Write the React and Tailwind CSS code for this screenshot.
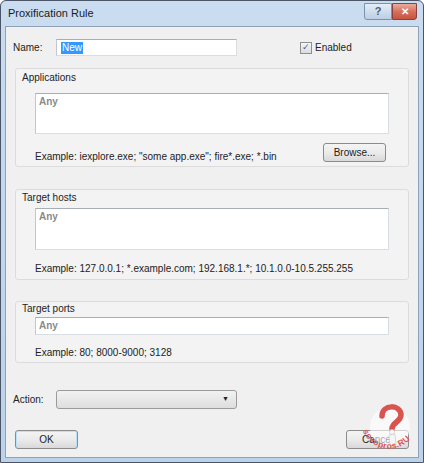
import React from 'react';

const FONT = { fontFamily: '"Liberation Sans", Arial, sans-serif' };

function Field({ className = '', children }) {
  return (
    <div className={`bg-white border border-[#d9dee4] border-t-[#a9adb5] border-l-[#c3c7cd] text-[10px] leading-[12px] ${className}`}>
      {children}
    </div>
  );
}

function Btn({ label, className = '' }) {
  return (
    <div className={`h-[19px] flex items-center justify-center rounded-[3px] border border-[#8b8b8b] bg-gradient-to-b from-[#f4f4f4] via-[#ebebeb] to-[#d9d9d9] text-[10px] text-[#222] shrink-0 ${className}`}>
      {label}
    </div>
  );
}

function Group({ title, labelTop, className, children }) {
  return (
    <div className={`mx-[9px] rounded-[3px] border border-[#dcdcdc] bg-[#f3f3f3] px-[19px] relative shrink-0 ${className}`}>
      <div className={`absolute left-[6px] text-[10px] leading-[12px] text-[#222] ${labelTop}`}>{title}</div>
      {children}
    </div>
  );
}

function Watermark() {
  return (
    <svg className="absolute left-[340px] top-[362px]" width="80" height="70" viewBox="0 0 80 70">
      <circle cx="44" cy="38" r="20" fill="#ffffff" fillOpacity="0.6" />
      <path d="M36 27 C36 15 55 15 55 26 C55 33 46 33 46 40" fill="none" stroke="#d9534f" strokeWidth="5.5" strokeLinecap="round" />
      <circle cx="46" cy="43" r="2.6" fill="#f6f6f6" stroke="#c4c4c4" strokeWidth="0.6" />
      <path d="M43 46 L49 45 L50 56 L44 57 Z" fill="#f6f6f6" stroke="#c4c4c4" strokeWidth="0.6" />
      <defs>
        <path id="wm-arc" d="M17 42 A28 28 0 0 0 71 30" />
      </defs>
      <text fontSize="8.5" fill="#d9534f" fontFamily="Liberation Sans, Arial, sans-serif" fontWeight="bold" letterSpacing="0.4">
        <textPath href="#wm-arc">sovopros.RU</textPath>
      </text>
    </svg>
  );
}

export default function App() {
  return (
    <div className="w-[424px] h-[463px] bg-white" style={FONT}>
      <div className="w-full h-full flex flex-col rounded-t-[6px] border border-[#4a5666] bg-gradient-to-b from-[#c9dcf0] to-[#bcd2ea]">
        {/* Title bar */}
        <div className="h-[25px] flex items-center pl-[7px] pr-[6px] shrink-0">
          <span className="text-[11px] text-[#1b1b1b]">Proxification Rule</span>
          <div className="ml-auto flex items-start self-start">
            <div className="w-[28px] h-[17px] mt-[2px] rounded-bl-[3px] border border-[#7d93ad] bg-gradient-to-b from-[#e4edf7] to-[#bccee3] flex items-center justify-center text-[11px] text-[#4c5e76] font-bold">?</div>
            <div className="w-[25px] h-[17px] mt-[2px] rounded-br-[3px] border border-[#8a4040] bg-gradient-to-b from-[#e9ad9d] via-[#d7705a] to-[#c9523c] flex items-center justify-center text-[10px] text-white font-bold">✕</div>
          </div>
        </div>

        {/* Client area */}
        <div className="flex-1 mx-[4px] mb-[4px] border border-[#8da2ba] bg-[#f0f0f0] flex flex-col relative text-[#222]">
          {/* Name row */}
          <div className="flex items-center mt-[12px] h-[17px] shrink-0">
            <span className="w-[50px] shrink-0 pl-[7px] text-[10px]">Name:</span>
            <Field className="w-[181px] h-[17px] shrink-0 flex items-center pl-[4px]">
              <span className="bg-[#3399ff] text-white px-[1px]">New</span>
            </Field>
            <div className="ml-[63px] flex items-center gap-[3px]">
              <div className="w-[12px] h-[12px] border border-[#8f8f8f] bg-gradient-to-b from-[#f6f6f6] to-[#dcdcdc] flex items-center justify-center text-[9px] leading-none text-[#4a5b8a]">✓</div>
              <span className="text-[10px]">Enabled</span>
            </div>
          </div>

          {/* Applications */}
          <Group title="Applications" labelTop="top-[3px]" className="mt-[12px] h-[99px]">
            <Field className="mt-[24px] h-[41px] pl-[3px] pt-[2px]">
              <span className="text-[#8a8a8a] font-bold">Any</span>
            </Field>
            <div className="flex items-start mt-[9px] pr-[3px]">
              <span className="text-[10px] leading-[12px] mt-[8px]">Example: iexplore.exe; "some app.exe"; fire*.exe; *.bin</span>
              <Btn label="Browse..." className="ml-auto w-[63px]" />
            </div>
          </Group>

          {/* Target hosts */}
          <Group title="Target hosts" labelTop="top-[2px]" className="mt-[22px] h-[91px]">
            <Field className="mt-[18px] h-[42px] pl-[3px] pt-[2px]">
              <span className="text-[#8a8a8a] font-bold">Any</span>
            </Field>
            <div className="mt-[13px] text-[10px] leading-[12px]">Example: 127.0.0.1; *.example.com; 192.168.1.*; 10.1.0.0-10.5.255.255</div>
          </Group>

          {/* Target ports */}
          <Group title="Target ports" labelTop="top-[1px]" className="mt-[21px] h-[62px]">
            <Field className="mt-[15px] h-[18px] pl-[3px] flex items-center">
              <span className="text-[#8a8a8a] font-bold">Any</span>
            </Field>
            <div className="mt-[12px] text-[10px] leading-[12px]">Example: 80; 8000-9000; 3128</div>
          </Group>

          {/* Action */}
          <div className="flex items-center mt-[27px] h-[19px] shrink-0">
            <span className="w-[50px] shrink-0 pl-[7px] text-[10px]">Action:</span>
            <div className="w-[181px] h-[19px] shrink-0 rounded-[3px] border border-[#9a9a9a] bg-gradient-to-b from-[#f2f2f2] to-[#dedede] flex items-center justify-end pr-[7px]">
              <span className="text-[7px] text-[#222]">▼</span>
            </div>
          </div>

          {/* Buttons */}
          <div className="flex items-center mt-[21px] px-[9px] shrink-0">
            <Btn label="OK" className="w-[63px] border-[#3c7fb1] shadow-[inset_0_0_0_1px_#b9e3fb]" />
            <Btn label="Cancel" className="ml-auto w-[63px]" />
          </div>

          <Watermark />
        </div>
      </div>
    </div>
  );
}
